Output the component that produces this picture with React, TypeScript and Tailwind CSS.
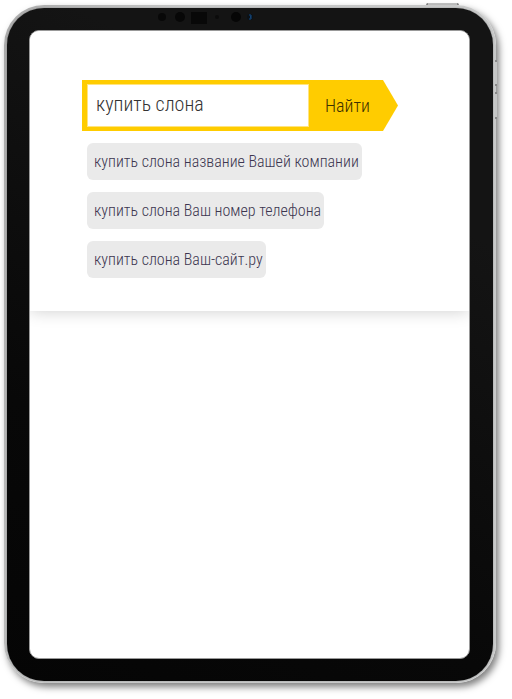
import { useState } from "react";

const suggestions = [
  "купить слона название Вашей компании",
  "купить слона Ваш номер телефона",
  "купить слона Ваш-сайт.ру",
];

function Camera() {
  return (
    <svg className="h-[23px] w-[110px]" viewBox="0 0 110 23" aria-hidden="true">
      <circle cx="7" cy="9" r="4" fill="#080808" />
      <circle cx="25" cy="9" r="5" fill="#070707" />
      <rect x="36" y="4" width="16" height="12" fill="#080808" />
      <circle cx="62" cy="9" r="2" fill="#0b0b0b" />
      <circle cx="81" cy="9" r="5" fill="#060606" />
      <circle cx="95" cy="9" r="3" fill="#0a1118" />
      <path d="M94 7h2v2h-1h1v2h-2" fill="none" stroke="#154a80" strokeWidth="1" />
    </svg>
  );
}

function SearchForm() {
  const [query, setQuery] = useState("купить слона");
  return (
    <form
      onSubmit={(e) => e.preventDefault()}
      className="flex w-[316px] bg-[#ffcc00] py-1 pl-[5px] [clip-path:polygon(0_0,calc(100%-15px)_0,100%_50%,calc(100%-15px)_100%,0_100%)]"
    >
      <input
        type="text"
        aria-label="Поисковый запрос"
        value={query}
        onChange={(e) => setQuery(e.target.value)}
        className="h-[43px] w-[222px] border border-[#ffe480] bg-white px-2 pb-1 text-xl text-[#333] outline-none"
      />
      <button type="submit" className="flex-1 pl-4 text-left text-lg text-[#3d3100]">
        Найти
      </button>
    </form>
  );
}

export default function App() {
  return (
    <div className="flex flex-col overflow-hidden bg-white pb-4 pl-1 pr-4 pt-[3px] font-['Roboto_Condensed','Lato','Liberation_Sans',sans-serif] font-light">
      <div className="flex justify-end pr-[37px]" aria-hidden="true">
        <div className="h-[2px] w-[33px] rounded-t-sm border-x-2 border-[#888] bg-[#c4c5c5]" />
      </div>
      <div className="relative rounded-[40px] bg-[linear-gradient(100deg,#aaa,#c6c7c7_30%,#c8c9c9)] px-[3px] pb-[2px] pt-[3px] shadow-[3px_4px_7px_0_rgba(0,0,0,0.5)]">
        <div className="absolute -right-px top-[55px] flex flex-col gap-[6px]" aria-hidden="true">
          <div className="h-[26px] w-[2px] border-y-2 border-[#888] bg-[#c4c5c5]" />
          <div className="h-[27px] w-[2px] border-y-2 border-[#888] bg-[#c4c5c5]" />
        </div>
        <div className="rounded-[37px] bg-[linear-gradient(30deg,#050505,#080808_30%,#141414_75%)] pb-[22px] pl-[22px] pr-[23px] shadow-[0_0_1px_#444]">
          <div className="flex h-[22px] justify-start overflow-hidden pl-[126px]">
            <Camera />
          </div>
          <main className="overflow-hidden rounded-[10px] border border-[#999] bg-white">
            <section className="bg-white pb-[33px] pl-[52px] pt-[49px] shadow-[0_0_16px_rgba(0,0,0,0.2)]">
              <SearchForm />
              <ul className="flex flex-col items-start gap-3 pl-[5px] pt-3">
                {suggestions.map((text) => (
                  <li key={text} className="flex">
                    <button
                      type="button"
                      className="h-[37px] whitespace-nowrap rounded-md bg-[#eaeaea] pl-[7px] pr-[3px] text-base text-[#3c3650]"
                    >
                      {text}
                    </button>
                  </li>
                ))}
              </ul>
            </section>
            <section className="min-h-[347px]" aria-label="Результаты" />
          </main>
        </div>
      </div>
    </div>
  );
}
